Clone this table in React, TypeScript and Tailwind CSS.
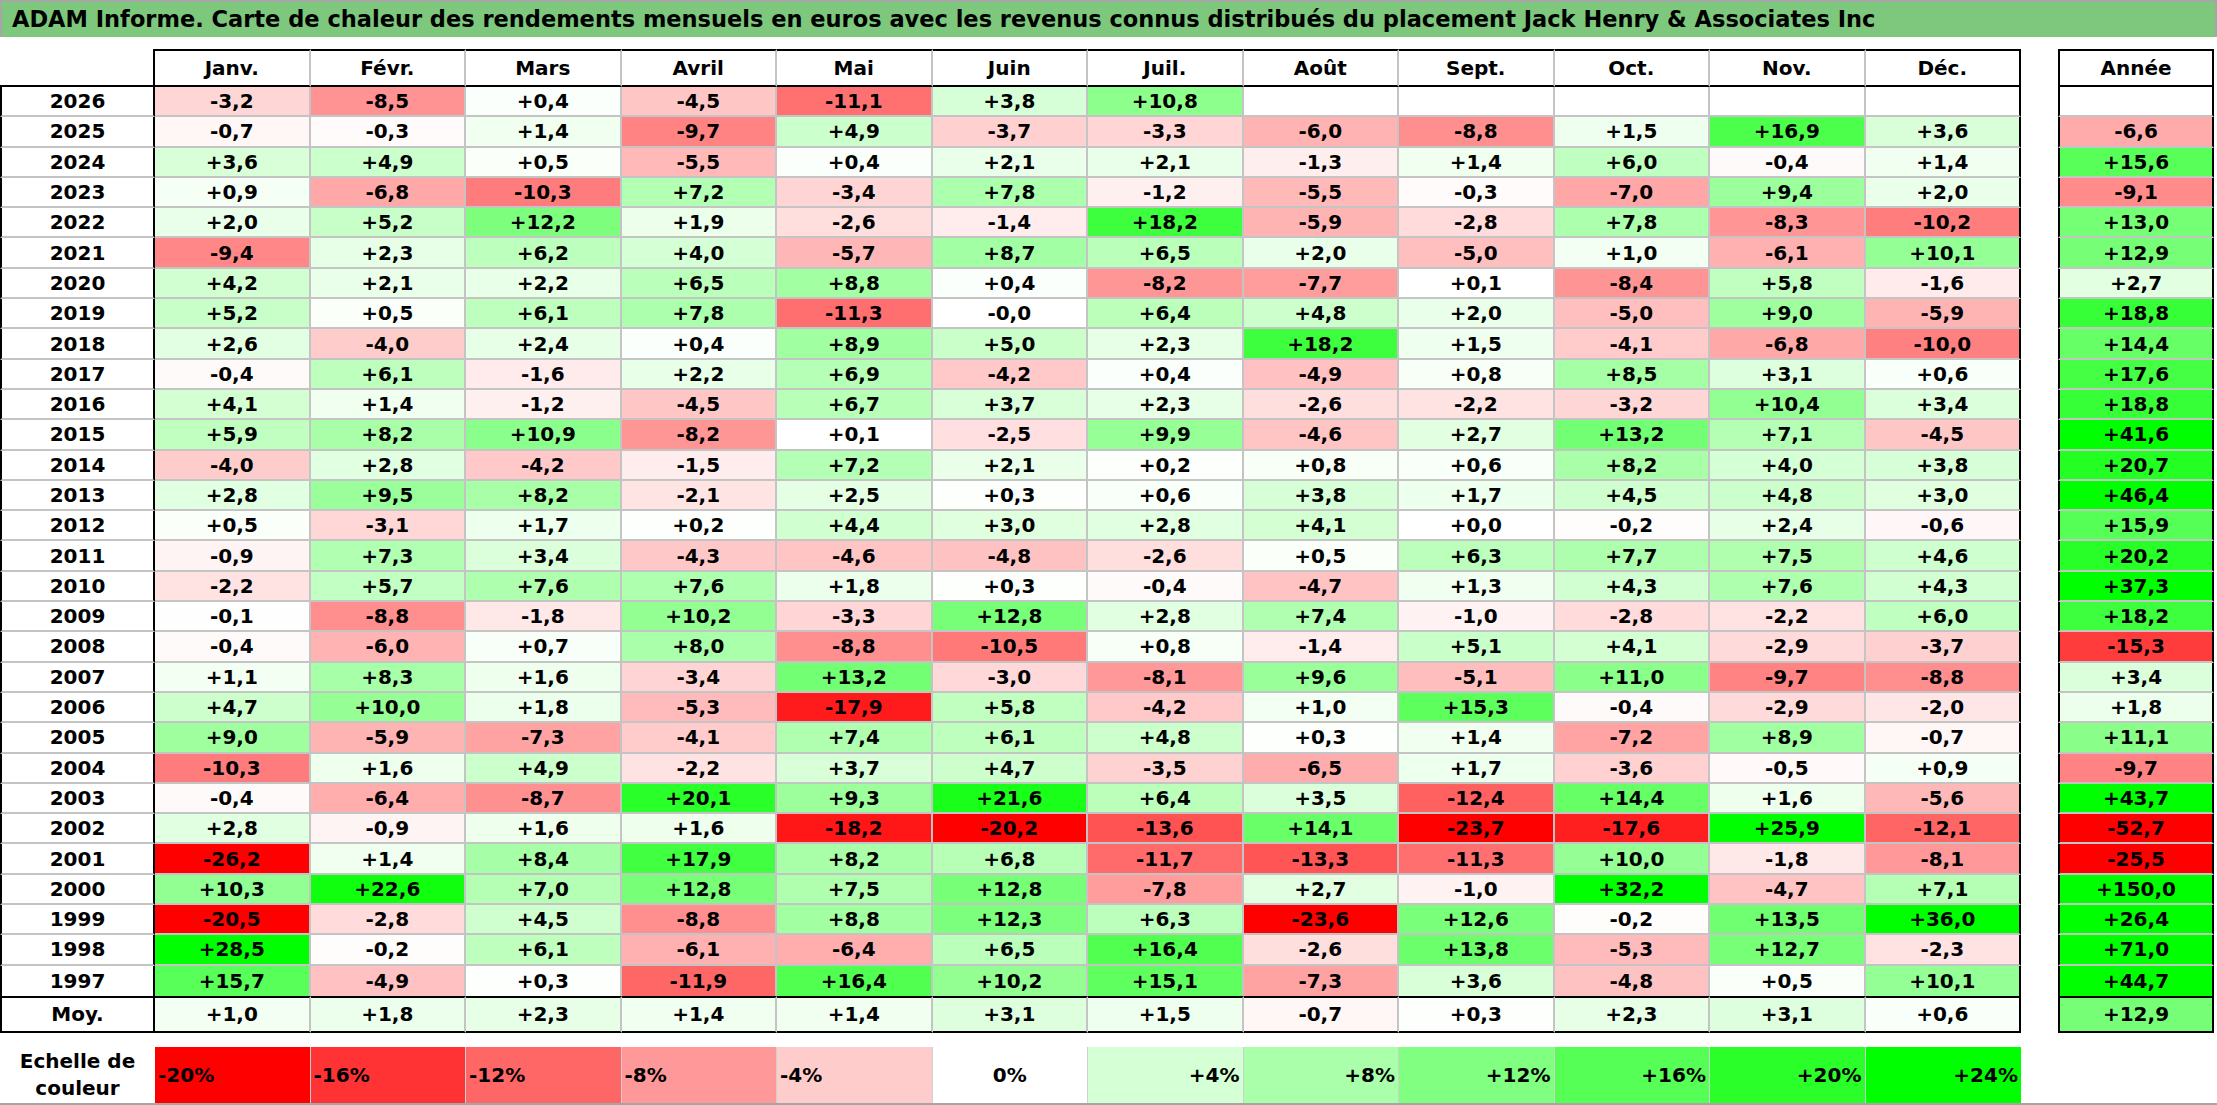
const MONTHS = ['Janv.', 'Févr.', 'Mars', 'Avril', 'Mai', 'Juin', 'Juil.', 'Août', 'Sept.', 'Oct.', 'Nov.', 'Déc.'];

type Row = { year: string; values: string[]; total: string };

const raw: string[] = [
  '2026|-3,2 -8,5 +0,4 -4,5 -11,1 +3,8 +10,8 _ _ _ _ _|_',
  '2025|-0,7 -0,3 +1,4 -9,7 +4,9 -3,7 -3,3 -6,0 -8,8 +1,5 +16,9 +3,6|-6,6',
  '2024|+3,6 +4,9 +0,5 -5,5 +0,4 +2,1 +2,1 -1,3 +1,4 +6,0 -0,4 +1,4|+15,6',
  '2023|+0,9 -6,8 -10,3 +7,2 -3,4 +7,8 -1,2 -5,5 -0,3 -7,0 +9,4 +2,0|-9,1',
  '2022|+2,0 +5,2 +12,2 +1,9 -2,6 -1,4 +18,2 -5,9 -2,8 +7,8 -8,3 -10,2|+13,0',
  '2021|-9,4 +2,3 +6,2 +4,0 -5,7 +8,7 +6,5 +2,0 -5,0 +1,0 -6,1 +10,1|+12,9',
  '2020|+4,2 +2,1 +2,2 +6,5 +8,8 +0,4 -8,2 -7,7 +0,1 -8,4 +5,8 -1,6|+2,7',
  '2019|+5,2 +0,5 +6,1 +7,8 -11,3 -0,0 +6,4 +4,8 +2,0 -5,0 +9,0 -5,9|+18,8',
  '2018|+2,6 -4,0 +2,4 +0,4 +8,9 +5,0 +2,3 +18,2 +1,5 -4,1 -6,8 -10,0|+14,4',
  '2017|-0,4 +6,1 -1,6 +2,2 +6,9 -4,2 +0,4 -4,9 +0,8 +8,5 +3,1 +0,6|+17,6',
  '2016|+4,1 +1,4 -1,2 -4,5 +6,7 +3,7 +2,3 -2,6 -2,2 -3,2 +10,4 +3,4|+18,8',
  '2015|+5,9 +8,2 +10,9 -8,2 +0,1 -2,5 +9,9 -4,6 +2,7 +13,2 +7,1 -4,5|+41,6',
  '2014|-4,0 +2,8 -4,2 -1,5 +7,2 +2,1 +0,2 +0,8 +0,6 +8,2 +4,0 +3,8|+20,7',
  '2013|+2,8 +9,5 +8,2 -2,1 +2,5 +0,3 +0,6 +3,8 +1,7 +4,5 +4,8 +3,0|+46,4',
  '2012|+0,5 -3,1 +1,7 +0,2 +4,4 +3,0 +2,8 +4,1 +0,0 -0,2 +2,4 -0,6|+15,9',
  '2011|-0,9 +7,3 +3,4 -4,3 -4,6 -4,8 -2,6 +0,5 +6,3 +7,7 +7,5 +4,6|+20,2',
  '2010|-2,2 +5,7 +7,6 +7,6 +1,8 +0,3 -0,4 -4,7 +1,3 +4,3 +7,6 +4,3|+37,3',
  '2009|-0,1 -8,8 -1,8 +10,2 -3,3 +12,8 +2,8 +7,4 -1,0 -2,8 -2,2 +6,0|+18,2',
  '2008|-0,4 -6,0 +0,7 +8,0 -8,8 -10,5 +0,8 -1,4 +5,1 +4,1 -2,9 -3,7|-15,3',
  '2007|+1,1 +8,3 +1,6 -3,4 +13,2 -3,0 -8,1 +9,6 -5,1 +11,0 -9,7 -8,8|+3,4',
  '2006|+4,7 +10,0 +1,8 -5,3 -17,9 +5,8 -4,2 +1,0 +15,3 -0,4 -2,9 -2,0|+1,8',
  '2005|+9,0 -5,9 -7,3 -4,1 +7,4 +6,1 +4,8 +0,3 +1,4 -7,2 +8,9 -0,7|+11,1',
  '2004|-10,3 +1,6 +4,9 -2,2 +3,7 +4,7 -3,5 -6,5 +1,7 -3,6 -0,5 +0,9|-9,7',
  '2003|-0,4 -6,4 -8,7 +20,1 +9,3 +21,6 +6,4 +3,5 -12,4 +14,4 +1,6 -5,6|+43,7',
  '2002|+2,8 -0,9 +1,6 +1,6 -18,2 -20,2 -13,6 +14,1 -23,7 -17,6 +25,9 -12,1|-52,7',
  '2001|-26,2 +1,4 +8,4 +17,9 +8,2 +6,8 -11,7 -13,3 -11,3 +10,0 -1,8 -8,1|-25,5',
  '2000|+10,3 +22,6 +7,0 +12,8 +7,5 +12,8 -7,8 +2,7 -1,0 +32,2 -4,7 +7,1|+150,0',
  '1999|-20,5 -2,8 +4,5 -8,8 +8,8 +12,3 +6,3 -23,6 +12,6 -0,2 +13,5 +36,0|+26,4',
  '1998|+28,5 -0,2 +6,1 -6,1 -6,4 +6,5 +16,4 -2,6 +13,8 -5,3 +12,7 -2,3|+71,0',
  '1997|+15,7 -4,9 +0,3 -11,9 +16,4 +10,2 +15,1 -7,3 +3,6 -4,8 +0,5 +10,1|+44,7',
];

const rows: Row[] = raw.map(line => {
  const [year, vals, total] = line.split('|');
  return {
    year,
    values: vals.split(' ').map(v => (v === '_' ? '' : v)),
    total: total === '_' ? '' : total,
  };
});

const average: Row = {
  year: 'Moy.',
  values: ['+1,0', '+1,8', '+2,3', '+1,4', '+1,4', '+3,1', '+1,5', '-0,7', '+0,3', '+2,3', '+3,1', '+0,6'],
  total: '+12,9',
};

// Excel style scale: -20% full red, 0 white, +24% full green
const heatColor = (n: number | null) => {
  if (n === null) return '#ffffff';
  if (n < 0) {
    const c = Math.round(255 * (1 - Math.min(-n / 20, 1)));
    return `rgb(255, ${c}, ${c})`;
  }
  const c = Math.round(255 * (1 - Math.min(n / 24, 1)));
  return `rgb(${c}, 255, ${c})`;
};

const toNum = (v: string) => (v === '' ? null : parseFloat(v.replace(',', '.')));

const LEGEND = [-20, -16, -12, -8, -4, 0, 4, 8, 12, 16, 20, 24];

function DataRow({ row, isLast }: { row: Row; isLast: boolean }) {
  return (
    <div className="flex h-[30.3px]">
      <div
        className={`flex w-[155px] items-center justify-center border-l-2 border-r-2 border-l-black border-r-black ${
          isLast ? '' : 'border-b-2 border-b-[#c4c4c4]'
        }`}
      >
        {row.year}
      </div>
      {row.values.map((v, i) => (
        <div
          key={i}
          className={`flex w-[155.5px] items-center justify-center border-r-2 ${
            i === 11 ? 'border-r-black' : 'border-r-[#c4c4c4]'
          } ${isLast ? '' : 'border-b-2 border-b-[#c4c4c4]'}`}
          style={{ backgroundColor: heatColor(toNum(v)) }}
        >
          {v}
        </div>
      ))}
      <div className="w-[37px]" />
      <div
        className={`flex w-[156px] items-center justify-center border-l-2 border-r-2 border-l-black border-r-black ${
          isLast ? '' : 'border-b-2 border-b-[#c4c4c4]'
        }`}
        style={{ backgroundColor: heatColor(toNum(row.total)) }}
      >
        {row.total}
      </div>
    </div>
  );
}

export default function App() {
  return (
    <div className="h-[1105px] w-[2217px] overflow-hidden border-b-2 border-b-[#a6a6a6] bg-white font-['DejaVu_Sans',sans-serif] text-[20px] font-bold leading-none text-black">
      {/* Title */}
      <div className="flex h-[37px] items-center border-x-2 border-t-2 border-[#a6a6a6] bg-[#7dc87d] pl-[10px] text-[22.5px]">
        ADAM Informe. Carte de chaleur des rendements mensuels en euros avec les revenus connus distribués du placement Jack Henry &amp; Associates Inc
      </div>

      <div className="mt-[12px]">
        {/* Header */}
        <div className="flex h-[38px]">
          <div className="w-[155px] border-b-2 border-r-2 border-black" />
          {MONTHS.map((m, i) => (
            <div
              key={m}
              className={`flex w-[155.5px] items-center justify-center border-y-2 border-r-2 border-y-black ${
                i === 11 ? 'border-r-black' : 'border-r-[#c4c4c4]'
              }`}
            >
              {m}
            </div>
          ))}
          <div className="w-[37px]" />
          <div className="flex w-[156px] items-center justify-center border-2 border-black">Année</div>
        </div>

        {rows.map((row, idx) => (
          <DataRow key={row.year} row={row} isLast={idx === rows.length - 1} />
        ))}

        {/* Average */}
        <div className="flex h-[37px]">
          <div className="flex w-[155px] items-center justify-center border-2 border-black">{average.year}</div>
          {average.values.map((v, i) => (
            <div
              key={i}
              className={`flex w-[155.5px] items-center justify-center border-y-2 border-r-2 border-y-black ${
                i === 11 ? 'border-r-black' : 'border-r-[#c4c4c4]'
              }`}
              style={{ backgroundColor: heatColor(toNum(v)) }}
            >
              {v}
            </div>
          ))}
          <div className="w-[37px]" />
          <div
            className="flex w-[156px] items-center justify-center border-2 border-black"
            style={{ backgroundColor: heatColor(toNum(average.total)) }}
          >
            {average.total}
          </div>
        </div>
      </div>

      {/* Colour scale */}
      <div className="mt-[14px] flex h-[56px]">
        <div className="flex w-[155px] flex-col items-center justify-center gap-[7px]">
          <span>Echelle de</span>
          <span>couleur</span>
        </div>
        {LEGEND.map((p, i) => (
          <div
            key={p}
            className={`flex w-[155.5px] items-center px-[3px] ${
              p < 0 ? 'justify-start' : p === 0 ? 'justify-center' : 'justify-end'
            } ${i === 11 ? '' : 'border-r border-r-[#d0d0d0]'}`}
            style={{ backgroundColor: heatColor(p) }}
          >
            {p > 0 ? `+${p}%` : `${p}%`}
          </div>
        ))}
      </div>
    </div>
  );
}
